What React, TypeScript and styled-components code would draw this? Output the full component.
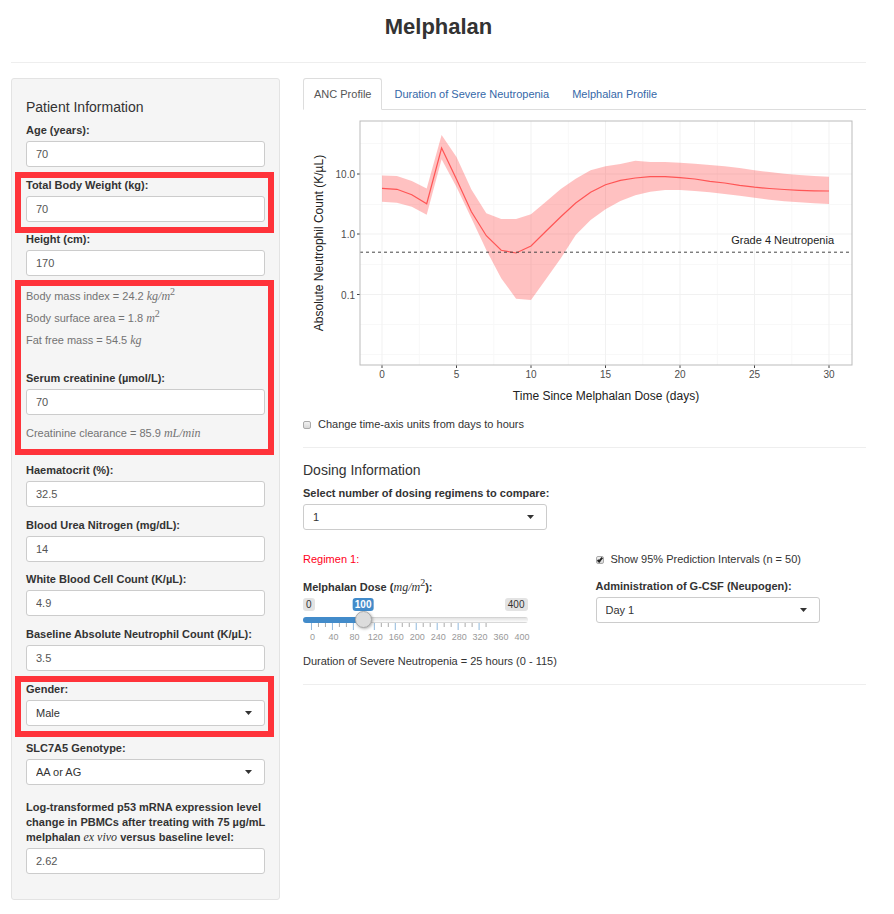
import React, { useState } from "react";
import styled, { createGlobalStyle } from "styled-components";

const SANS = '"Liberation Sans", Arial, Helvetica, sans-serif';
const SERIF = '"Liberation Serif", "Times New Roman", serif';

const GlobalStyle = createGlobalStyle`
  *, *::before, *::after { box-sizing: border-box; }
  body {
    margin: 0;
    background: #fff;
    color: #333;
    font-family: ${SANS};
    font-size: 11px;
    line-height: 15px;
  }
  input, select, button { font: inherit; color: inherit; }
`;

const Page = styled.div`
  padding: 12px 28px 14px 11px;
`;

const PageHeader = styled.header`
  padding-bottom: 20px;
  border-bottom: 1px solid #eee;
  margin-bottom: 15px;
`;

const PageTitle = styled.h1`
  margin: 0;
  text-align: center;
  font-size: 22px;
  line-height: 30px;
  font-weight: 700;
`;

const Columns = styled.div`
  display: grid;
  grid-template-columns: minmax(0, 269fr) minmax(0, 563fr);
  gap: 23px;
  align-items: start;
`;

const Sidebar = styled.form`
  padding: 19px 14px 25px;
  background: #f5f5f5;
  border: 1px solid #e3e3e3;
  border-radius: 3px;
`;

const SectionTitle = styled.h2`
  margin: 0 0 7px;
  font-size: 14px;
  line-height: 18px;
  font-weight: 500;
`;

const Field = styled.div<{ $gap?: number }>`
  display: flex;
  flex-direction: column;
  gap: 3px;
  margin-bottom: ${(p) => p.$gap ?? 11}px;
`;

const Label = styled.label<{ $nowrap?: boolean }>`
  font-weight: 700;
  white-space: ${(p) => (p.$nowrap ? "nowrap" : "normal")};
`;

const TextInput = styled.input`
  width: 100%;
  height: 26px;
  padding: 0 9px;
  color: #555;
  background: #fff;
  border: 1px solid #ccc;
  border-radius: 3px;
`;

const SelectBox = styled.div`
  display: grid;
  align-items: center;

  > * { grid-area: 1 / 1; }
  > svg {
    justify-self: end;
    margin-right: 13px;
    pointer-events: none;
  }
`;

const Select = styled.select`
  appearance: none;
  width: 100%;
  height: 26px;
  padding: 0 9px;
  background: #fff;
  border: 1px solid #ccc;
  border-radius: 3px;
`;

const Highlight = styled.div<{ $top?: number; $bottom: number }>`
  position: relative;

  &::after {
    content: "";
    position: absolute;
    top: ${(p) => p.$top ?? -6}px;
    right: -9px;
    bottom: ${(p) => p.$bottom}px;
    left: -11px;
    border: 6px solid #ff333a;
    pointer-events: none;
  }
`;

const Derived = styled.p<{ $gap?: number }>`
  margin: 0 0 ${(p) => p.$gap ?? 7}px;
  color: #737373;
`;

const MathText = styled.i`
  font-family: ${SERIF};
  font-size: 12px;
  line-height: 1;
  font-weight: 400;

  sup {
    font-size: 10px;
    font-style: normal;
    line-height: 0;
  }
`;

const Tabs = styled.div`
  display: flex;
  border-bottom: 1px solid #ddd;
`;

const Tab = styled.button<{ $active: boolean }>`
  height: 32px;
  margin: 0 1px -1px 0;
  padding: 0 10px;
  background: ${(p) => (p.$active ? "#fff" : "transparent")};
  border: 1px solid ${(p) => (p.$active ? "#ddd" : "transparent")};
  border-bottom-color: ${(p) => (p.$active ? "#fff" : "transparent")};
  border-radius: 3px 3px 0 0;
  color: ${(p) => (p.$active ? "#555" : "#3568a8")};
  cursor: pointer;
`;

const ChartSvg = styled.svg`
  display: block;
  width: 100%;
  height: auto;
  margin: 5px 0 8px;
  font-family: ${SANS};
`;

const CheckLabel = styled.label`
  display: flex;
  align-items: center;
  gap: 7px;
  white-space: nowrap;
`;

const CheckBox = styled.input`
  appearance: none;
  display: grid;
  place-items: center;
  flex: none;
  width: 8px;
  height: 8px;
  margin: 0;
  background: linear-gradient(#f2f2f2, #d8d8d8);
  border: 1px solid #aaa;
  border-radius: 2px;

  &:checked::before {
    content: "";
    width: 6px;
    height: 3px;
    border: solid #222;
    border-width: 0 0 2px 2px;
    rotate: -50deg;
  }
`;

const Rule = styled.hr`
  width: 100%;
  height: 1px;
  margin: 15px 0 13px;
  border: 0;
  background: #eee;
`;

const Narrow = styled.div`
  width: 244px;
  max-width: 100%;
`;

const Regimen = styled.section`
  display: grid;
  grid-template-columns: repeat(2, minmax(0, 1fr));
  gap: 0 22px;
`;

const RegimenColumn = styled.div`
  padding-right: 46px;
`;

const RegimenTitle = styled.p`
  margin: 0 0 13px;
  color: #ff0020;
`;

const IntervalOption = styled.div`
  margin-bottom: 12px;
`;

const RangeHeader = styled.div`
  display: flex;
  justify-content: space-between;
  margin-top: 3px;
`;

const RangeTag = styled.span`
  padding: 0 3px;
  font-size: 10px;
  line-height: 13px;
  background: #e3e3e3;
  border-radius: 3px;
`;

const RangeArea = styled.div`
  position: relative;
`;

const ValueTag = styled.output`
  position: absolute;
  top: 0;
  translate: -50% 0;
  padding: 0 2px;
  font-size: 10px;
  line-height: 13px;
  font-weight: 700;
  color: #fff;
  background: #428bca;
  border-radius: 3px;
`;

const RangeInput = styled.input`
  appearance: none;
  position: relative;
  display: block;
  width: 100%;
  height: 18px;
  margin: 0;
  background: transparent;

  &::-webkit-slider-runnable-track {
    height: 6px;
    border-radius: 4px;
    background: linear-gradient(#428bca, #428bca) 0 0 / var(--fill) 100% no-repeat,
      linear-gradient(#c8c8c8, #e4e4e4 20%, #fafafa 80%, #c0c0c0);
  }

  &::-webkit-slider-thumb {
    appearance: none;
    width: 17px;
    height: 17px;
    margin-top: -6px;
    background: #dcdcdc;
    border: 1px solid #aaa;
    border-radius: 50%;
    box-shadow: 1px 1px 3px rgba(0, 0, 0, 0.3);
  }
`;

const TickSvg = styled.svg`
  display: block;
  width: 100%;
  height: 8px;
  margin-top: -6px;
`;

const Scale = styled.div`
  display: grid;
  grid-template-columns: repeat(11, minmax(0, 1fr));
  margin: 0 -5px 0 -1px;
  font-size: 9px;
  line-height: 12px;
  text-align: center;
  color: #999;
`;

const Result = styled.p`
  margin: 11px 0 0;
  white-space: nowrap;
`;

const UPPER = [54.5, 55, 60, 67.5, 14, 36, 68.5, 92.3, 98, 98, 93.3, 80.7, 68, 57.7, 49.3, 45.3, 43, 39.7, 41, 41, 41.7, 42.7, 44, 45.3, 47, 49.3, 51, 52.7, 54, 55, 55.7];
const LOWER = [80.7, 81.7, 85.7, 93.7, 38.3, 66, 97.3, 129, 157.3, 177.7, 179, 158.3, 137.3, 114, 99, 88.3, 80, 74.3, 70.7, 69, 69, 70, 71.3, 73, 74.7, 76.7, 78.7, 80.3, 81.3, 82.3, 83];
const MEDIAN = [67.3, 68.3, 73.7, 82.7, 27, 58.3, 90.7, 114.7, 129.3, 132, 125, 110.3, 95.7, 82, 71.3, 63.7, 59.3, 57, 55.7, 55.7, 56.7, 58, 60.3, 62, 64.3, 66.2, 67.5, 68.5, 69.3, 69.8, 70];

const PANEL = { left: 57, top: 6, right: 549, bottom: 250 };
const dayX = (day: number) => 79 + day * 14.9;
const points = (values: number[]) => values.map((v, day) => `${dayX(day)},${v + PANEL.top}`);

function AncChart() {
  const band = [...points(UPPER), ...points(LOWER).reverse()].join(" ");
  return (
    <ChartSvg viewBox="0 0 563 294" role="img" aria-label="Absolute neutrophil count over time">
      {[28.5, 89.5, 149.5, 209.5, 239.5].map((y) => (
        <path key={y} d={`M${PANEL.left} ${y}H${PANEL.right}`} stroke="#f8f8f8" />
      ))}
      {[2.5, 7.5, 12.5, 17.5, 22.5, 27.5].map((d) => (
        <path key={d} d={`M${dayX(d)} ${PANEL.top}V${PANEL.bottom}`} stroke="#f8f8f8" />
      ))}
      {[0, 5, 10, 15, 20, 25, 30].map((d) => (
        <g key={d}>
          <path d={`M${dayX(d)} ${PANEL.top}V${PANEL.bottom}`} stroke="#f1f1f1" />
          <path d={`M${dayX(d)} ${PANEL.bottom}v3`} stroke="#444" />
          <text x={dayX(d)} y="263" textAnchor="middle" fontSize="10" fill="#4d4d4d">{d}</text>
        </g>
      ))}
      {[["10.0", 59], ["1.0", 119], ["0.1", 179.5]].map(([label, y]) => (
        <g key={label}>
          <path d={`M${PANEL.left} ${y}H${PANEL.right}`} stroke="#f1f1f1" />
          <path d={`M${PANEL.left - 3} ${y}h3`} stroke="#444" />
          <text x="52" y={Number(y) + 4} textAnchor="end" fontSize="10" fill="#4d4d4d">{label}</text>
        </g>
      ))}
      <polygon points={band} fill="#ff3333" fillOpacity="0.3" />
      <polyline points={points(MEDIAN).join(" ")} fill="none" stroke="#ff5555" strokeWidth="1.2" />
      <path d={`M${PANEL.left} 137.2H${PANEL.right}`} stroke="#444" strokeDasharray="3 3" />
      <rect x={PANEL.left} y={PANEL.top} width={PANEL.right - PANEL.left} height={PANEL.bottom - PANEL.top} fill="none" stroke="#bbb" />
      <text x="531" y="129" textAnchor="end" fontSize="11" fill="#222">Grade 4 Neutropenia</text>
      <text x="303" y="285" textAnchor="middle" fontSize="12" fill="#222">Time Since Melphalan Dose (days)</text>
      <text transform="translate(20 128) rotate(-90)" textAnchor="middle" fontSize="12" fill="#222">Absolute Neutrophil Count (K/µL)</text>
    </ChartSvg>
  );
}

function NumberField({ id, label, value, gap }: { id: string; label: React.ReactNode; value: string; gap?: number }) {
  return (
    <Field $gap={gap}>
      <Label htmlFor={id}>{label}</Label>
      <TextInput id={id} defaultValue={value} inputMode="decimal" />
    </Field>
  );
}

function SelectField({ id, label, options, gap }: { id: string; label: string; options: string[]; gap?: number }) {
  return (
    <Field $gap={gap}>
      <Label htmlFor={id} $nowrap>{label}</Label>
      <SelectBox>
        <Select id={id}>
          {options.map((o) => <option key={o}>{o}</option>)}
        </Select>
        <svg width="7" height="4" viewBox="0 0 7 4" aria-hidden="true"><path d="M0 0h7L3.500 4z" fill="#333" /></svg>
      </SelectBox>
    </Field>
  );
}

function DoseSlider() {
  const [dose, setDose] = useState(100);
  const fill = `${(dose / 400) * 100}%`;
  const left = `calc(${fill} + ${8 - (dose / 400) * 16}px)`;
  return (
    <RangeArea>
      <RangeHeader>
        <RangeTag>0</RangeTag>
        <RangeTag>400</RangeTag>
      </RangeHeader>
      <ValueTag htmlFor="dose" style={{ left }}>{dose}</ValueTag>
      <RangeInput
        id="dose"
        type="range"
        min={0}
        max={400}
        step={5}
        value={dose}
        onChange={(e) => setDose(Number(e.target.value))}
        style={{ "--fill": left } as React.CSSProperties}
      />
      <TickSvg viewBox="0 0 225 8" preserveAspectRatio="none" aria-hidden="true">
        {Array.from({ length: 26 }, (_, i) => (
          <path key={i} d={`M${8.5 + i * 7} 0v${i % 3 ? 4 : 7}`} stroke={i % 3 ? "#aaa" : "#8fb8dc"} />
        ))}
      </TickSvg>
      <Scale>
        {Array.from({ length: 11 }, (_, i) => <span key={i}>{i * 40}</span>)}
      </Scale>
    </RangeArea>
  );
}

const TABS = ["ANC Profile", "Duration of Severe Neutropenia", "Melphalan Profile"];

export default function App() {
  const [tab, setTab] = useState(TABS[0]);
  return (
    <>
      <GlobalStyle />
      <Page>
        <PageHeader>
          <PageTitle>Melphalan</PageTitle>
        </PageHeader>
        <Columns>
          <Sidebar>
            <SectionTitle>Patient Information</SectionTitle>
            <NumberField id="age" label="Age (years):" value="70" />
            <Highlight $bottom={-11}>
              <NumberField id="weight" label="Total Body Weight (kg):" value="70" gap={10} />
            </Highlight>
            <NumberField id="height" label="Height (cm):" value="170" gap={13} />
            <Highlight $top={-9} $bottom={-14}>
              <Derived>Body mass index = 24.2 <MathText>kg/m<sup>2</sup></MathText></Derived>
              <Derived>Body surface area = 1.8 <MathText>m<sup>2</sup></MathText></Derived>
              <Derived $gap={23}>Fat free mass = 54.5 <MathText>kg</MathText></Derived>
              <NumberField id="creatinine" label="Serum creatinine (µmol/L):" value="70" />
              <Derived $gap={22}>Creatinine clearance = 85.9 <MathText>mL/min</MathText></Derived>
            </Highlight>
            <NumberField id="haematocrit" label="Haematocrit (%):" value="32.5" />
            <NumberField id="bun" label="Blood Urea Nitrogen (mg/dL):" value="14" gap={10} />
            <NumberField id="wbc" label="White Blood Cell Count (K/µL):" value="4.9" />
            <NumberField id="anc" label="Baseline Absolute Neutrophil Count (K/µL):" value="3.5" />
            <Highlight $bottom={-11}>
              <SelectField id="gender" label="Gender:" options={["Male", "Female"]} gap={15} />
            </Highlight>
            <SelectField id="genotype" label="SLC7A5 Genotype:" options={["AA or AG", "GG"]} gap={15} />
            <NumberField
              id="p53"
              label={<>Log-transformed p53 mRNA expression level change in PBMCs after treating with 75 µg/mL melphalan <MathText>ex vivo</MathText> versus baseline level:</>}
              value="2.62"
              gap={0}
            />
          </Sidebar>
          <main>
            <Tabs role="tablist">
              {TABS.map((t) => (
                <Tab key={t} type="button" role="tab" aria-selected={t === tab} $active={t === tab} onClick={() => setTab(t)}>
                  {t}
                </Tab>
              ))}
            </Tabs>
            <AncChart />
            <CheckLabel>
              <CheckBox type="checkbox" />
              Change time-axis units from days to hours
            </CheckLabel>
            <Rule />
            <SectionTitle>Dosing Information</SectionTitle>
            <Narrow>
              <SelectField id="regimens" label="Select number of dosing regimens to compare:" options={["1", "2", "3"]} gap={22} />
            </Narrow>
            <Regimen>
              <RegimenColumn>
                <RegimenTitle>Regimen 1:</RegimenTitle>
                <Label htmlFor="dose">Melphalan Dose (<MathText>mg/m<sup>2</sup></MathText>):</Label>
                <DoseSlider />
                <Result>Duration of Severe Neutropenia = 25 hours (0 - 115)</Result>
              </RegimenColumn>
              <RegimenColumn>
                <IntervalOption>
                  <CheckLabel>
                    <CheckBox type="checkbox" defaultChecked />
                    Show 95% Prediction Intervals (n = 50)
                  </CheckLabel>
                </IntervalOption>
                <SelectField id="gcsf" label="Administration of G-CSF (Neupogen):" options={["Day 1", "Day 2", "Day 3"]} />
              </RegimenColumn>
            </Regimen>
            <Rule />
          </main>
        </Columns>
      </Page>
    </>
  );
}
